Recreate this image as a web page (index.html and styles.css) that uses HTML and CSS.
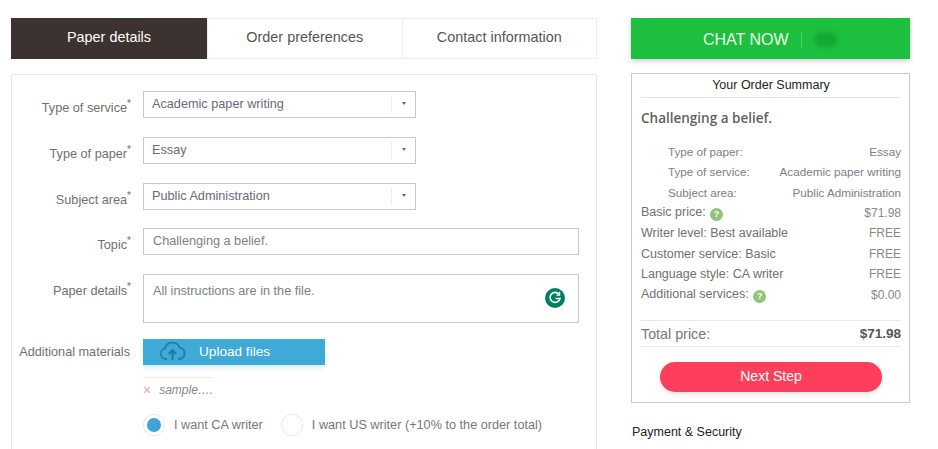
FILE: index.html
```html
<!DOCTYPE html>
<html lang="en">
<head>
    <meta charset="UTF-8">
    <meta name="viewport" content="width=device-width, initial-scale=1.0">
    <title>Order form</title>
    <link rel="stylesheet" href="styles.css">
</head>
<body>
    <div class="page">
        <div class="main">
            <div class="tabs">
                <div class="tab active">Paper details</div>
                <div class="tab">Order preferences</div>
                <div class="tab">Contact information</div>
            </div>

            <div class="panel">
                <div class="row">
                    <label>Type of service<sup>*</sup></label>
                    <div class="select"><span>Academic paper writing</span><i class="arrow"></i></div>
                </div>
                <div class="row">
                    <label>Type of paper<sup>*</sup></label>
                    <div class="select"><span>Essay</span><i class="arrow"></i></div>
                </div>
                <div class="row row-tight">
                    <label>Subject area<sup>*</sup></label>
                    <div class="select"><span>Public Administration</span><i class="arrow"></i></div>
                </div>
                <div class="row">
                    <label>Topic<sup>*</sup></label>
                    <div class="input">Challenging a belief.</div>
                </div>
                <div class="row">
                    <label>Paper details<sup>*</sup></label>
                    <div class="input textarea">
                        All instructions are in the file.
                        <svg class="grammarly" width="20" height="20" viewBox="0 0 20 20">
                            <circle cx="10" cy="10" r="10" fill="#00805f"/>
                            <path d="M14 6.2A5 5 0 1 0 15 10.5H10.6" fill="none" stroke="#fff" stroke-width="1.6"/>
                            <path d="M14.6 3.8V7.2H11.4" fill="none" stroke="#fff" stroke-width="1.2"/>
                        </svg>
                    </div>
                </div>
                <div class="row row-upload">
                    <label class="no-star">Additional materials</label>
                    <div class="upload">
                        <svg width="28" height="22" viewBox="0 0 28 22">
                            <path d="M8 19H6.5A5.2 5.2 0 0 1 6 8.7 7.6 7.6 0 0 1 20.6 7.6 5.8 5.8 0 0 1 21 19H19" fill="none" stroke="#1d7fa8" stroke-width="1.8"/>
                            <path d="M13.5 20V10M9.8 14l3.7-4 3.7 4" fill="none" stroke="#1d7fa8" stroke-width="2.2"/>
                        </svg>
                        <span>Upload files</span>
                    </div>
                </div>
                <div class="files">
                    <div class="file"><span class="remove">×</span><em>sample….</em></div>
                </div>
                <div class="radios">
                    <div class="radio"><span class="dot checked"></span>I want CA writer</div>
                    <div class="radio"><span class="dot"></span>I want US writer (+10% to the order total)</div>
                </div>
            </div>
        </div>

        <div class="side">
            <div class="chat">
                <span>CHAT NOW</span>
                <i class="chat-sep"></i>
                <i class="chat-blob"></i>
            </div>

            <div class="summary">
                <div class="summary-head">Your Order Summary</div>
                <div class="summary-title">Challenging a belief.</div>
                <div class="line sub"><span>Type of paper:</span><span>Essay</span></div>
                <div class="line sub"><span>Type of service:</span><span>Academic paper writing</span></div>
                <div class="line sub"><span>Subject area:</span><span>Public Administration</span></div>
                <div class="line"><span>Basic price: <i class="help">?</i></span><small>$71.98</small></div>
                <div class="line"><span>Writer level: Best available</span><small>FREE</small></div>
                <div class="line"><span>Customer service: Basic</span><small>FREE</small></div>
                <div class="line"><span>Language style: CA writer</span><small>FREE</small></div>
                <div class="line"><span>Additional services: <i class="help">?</i></span><small>$0.00</small></div>
                <div class="total"><span>Total price:</span><b>$71.98</b></div>
                <div class="next">Next Step</div>
            </div>

            <div class="payment">Payment &amp; Security</div>
        </div>
    </div>
</body>
</html>
```

FILE: styles.css
```css
html, body {
    height: 100%;
    overflow: hidden;
}
body {
    font-family: "Liberation Sans", Arial, sans-serif;
    font-size: 12.7px;
    color: #666;
    background: #fff;
    margin: 0;
}
.page {
    display: flex;
    gap: 34px;
    padding: 18px 0 0 11px;
}
.main {
    width: 586px;
}
.side {
    width: 279px;
}

/* tabs */
.tabs {
    display: flex;
    height: 41px;
    border: 1px solid #ececec;
    border-left: none;
    box-sizing: border-box;
}
.tab {
    flex: 1;
    display: flex;
    align-items: center;
    justify-content: center;
    padding-bottom: 4px;
    box-sizing: border-box;
    border-left: 1px solid #ececec;
    color: #555;
    font-size: 14.4px;
}
.tab.active {
    flex: none;
    width: 196px;
    margin: -1px 0;
    border: none;
    background: #3c3230;
    color: #fff;
}

/* form */
.panel {
    margin-top: 15px;
    height: 420px;
    padding-top: 16px;
    box-sizing: border-box;
    border: 1px solid #e6e6e6;
    border-radius: 2px;
}
.row {
    display: flex;
    gap: 12px;
    margin-bottom: 19px;
}
.row-tight {
    margin-bottom: 18px;
}
.row label {
    width: 119px;
    height: 27px;
    text-align: right;
    line-height: 35px;
    color: #707070;
    white-space: nowrap;
    flex: none;
}
.row label.no-star {
    line-height: 27px;
    padding-right: 1px;
    width: 118px;
}
sup {
    font-size: 10px;
    line-height: 0;
}
.select {
    width: 273px;
    height: 27px;
    box-sizing: border-box;
    border: 1px solid #c8c8c8;
    padding: 0 8px;
    line-height: 24px;
    color: #6a6a78;
    display: flex;
    justify-content: space-between;
    position: relative;
}
.select:after {
    content: '';
    position: absolute;
    right: 23px;
    top: 4px;
    bottom: 4px;
    border-left: 1px solid #ececec;
}
.arrow {
    width: 0;
    height: 0;
    margin: 10px 1px 0 0;
    border: 2.5px solid transparent;
    border-top: 3px solid #666;
}
.input {
    width: 436px;
    height: 27px;
    box-sizing: border-box;
    border: 1px solid #c8c8c8;
    padding: 0 9px;
    line-height: 24px;
    color: #808080;
}
.textarea {
    height: 49px;
    line-height: 33px;
    position: relative;
}
.grammarly {
    position: absolute;
    right: 13px;
    top: 13px;
}
.row-upload {
    margin-bottom: 0;
    margin-top: -3px;
}
.upload {
    width: 182px;
    height: 26px;
    background: #3fa9d8;
    box-shadow: 0 3px 5px rgba(63, 169, 216, 0.2);
    color: #fff;
    font-size: 13.6px;
    display: flex;
    align-items: center;
    padding: 0 0 2px 16px;
    box-sizing: border-box;
    gap: 12px;
}
.files {
    margin: 11px 0 0 131px;
}
.file {
    width: 70px;
    border-top: 1px solid #ececec;
    padding-top: 4px;
    font-size: 12px;
    color: #888;
    line-height: 17px;
    display: flex;
    gap: 8px;
}
.remove {
    color: #f0a0a8;
    font-size: 14px;
}
.radios {
    display: flex;
    gap: 18px;
    margin: 15px 0 0 131px;
    color: #777;
}
.radio {
    display: flex;
    align-items: center;
    gap: 9px;
    white-space: nowrap;
}
.dot {
    width: 22px;
    height: 22px;
    box-sizing: border-box;
    border: 1px dotted #d4d4d4;
    border-radius: 50%;
    display: flex;
    align-items: center;
    justify-content: center;
}
.dot.checked:before {
    content: '';
    width: 14px;
    height: 14px;
    border-radius: 50%;
    background: #3fa3da;
}

/* right column */
.chat {
    height: 41px;
    background: #1cc03e;
    box-shadow: 0 2px 5px rgba(0, 0, 0, 0.2);
    color: #e8ffe8;
    font-size: 16px;
    display: flex;
    align-items: center;
    gap: 12px;
    padding: 2px 0 0 72px;
    box-sizing: border-box;
}
.chat-sep {
    width: 1px;
    height: 16px;
    background: #4ccf68;
}
.chat-blob {
    width: 22px;
    height: 15px;
    margin-left: 1px;
    border-radius: 6px;
    background: #14a832;
    filter: blur(2px);
}
.summary {
    margin-top: 14px;
    height: 330px;
    box-sizing: border-box;
    border: 1px solid #c9c9c9;
    padding: 0 8px 0 9px;
}
.summary-head {
    height: 23px;
    line-height: 23px;
    font-size: 12.5px;
    text-align: center;
    color: #222;
    border-bottom: 1px solid #e4e4e4;
}
.summary-title {
    font-family: "Open Sans", sans-serif;
    font-size: 13.5px;
    font-weight: 600;
    color: #5f5f5f;
    margin: 10px 0 13px;
    line-height: 20px;
}
.line {
    display: flex;
    justify-content: space-between;
    align-items: center;
    height: 20.5px;
    font-size: 12.5px;
    color: #707070;
}
.line small {
    font-size: 12px;
    color: #888;
}
.line.sub {
    font-size: 11.7px;
    padding-left: 27px;
    color: #808080;
}
.help {
    display: inline-block;
    width: 13px;
    height: 13px;
    border-radius: 50%;
    background: #8fc47c;
    color: #fff;
    font-size: 9px;
    font-style: normal;
    font-weight: bold;
    line-height: 13px;
    text-align: center;
    vertical-align: -1px;
    margin-left: 1px;
}
.total {
    display: flex;
    justify-content: space-between;
    align-items: center;
    height: 25px;
    margin-top: 15px;
    border-top: 1px solid #e8e8e8;
    border-bottom: 1px solid #e8e8e8;
    font-size: 14.3px;
    color: #777;
}
.total b {
    font-size: 13.5px;
    color: #555;
}
.next {
    width: 222px;
    height: 30px;
    margin: 15px 0 0 19px;
    border-radius: 15px;
    background: #fd3f5b;
    box-shadow: 0 2px 5px rgba(0, 0, 0, 0.12);
    color: #fff;
    font-size: 14px;
    text-align: center;
    line-height: 29px;
}
.payment {
    margin-top: 21px;
    padding: 0 0 9px 1px;
    border-bottom: 1px solid #e4e4e4;
    font-size: 12.5px;
    color: #222;
    line-height: 16px;
}
```
